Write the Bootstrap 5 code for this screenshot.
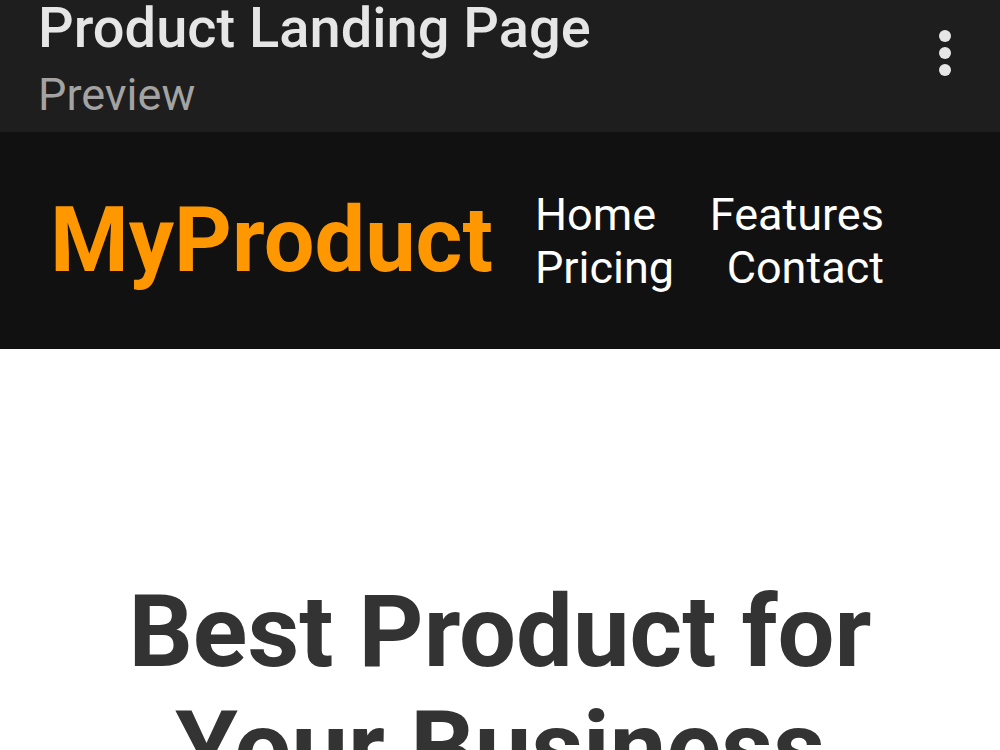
<!DOCTYPE html>
<html lang="en">
<head>
<meta charset="utf-8">
<link href="https://cdn.jsdelivr.net/npm/bootstrap@5.3.0/dist/css/bootstrap.min.css" rel="stylesheet">
<style>
html,body{height:750px;overflow:hidden;background:#fff;}
body{font-family:Roboto,"Liberation Sans",sans-serif;}
.app-bar{height:132px;background:#1e1e1e;padding:0 49px 0 39px;overflow:hidden;}
.app-copy{margin-left:-1px;margin-top:-14px;}
.app-title{font-size:56px;font-weight:500;color:#e6e6e6;line-height:56px;}
.app-sub{font-size:45px;color:#a3a3a3;line-height:48px;margin-top:15px;}
.dots{gap:5px;margin-top:-26px;}
.dots span{width:12px;height:12px;border-radius:50%;background:#e6e6e6;display:block;}
.site-nav{height:217px;background:#111;padding-left:50px;}
.brand{font-size:90px;font-weight:700;color:#ff9800;line-height:1;}
.nav-links{margin-left:42px;width:349px;font-size:45px;line-height:53px;color:#fff;}
.hero-head{font-size:101px;font-weight:700;color:#333;line-height:116px;text-align:center;margin:0;padding-top:225px;}
</style>
</head>
<body>
<header class="app-bar d-flex justify-content-between align-items-center">
<div class="app-copy"><div class="app-title">Product Landing Page</div><div class="app-sub">Preview</div></div>
<div class="dots d-flex flex-column"><span></span><span></span><span></span></div>
</header>
<nav class="site-nav d-flex align-items-center">
<div class="brand">MyProduct</div>
<div class="nav-links"><div class="d-flex justify-content-between"><span>Home</span><span>Features</span></div><div class="d-flex justify-content-between"><span>Pricing</span><span>Contact</span></div></div>
</nav>
<h1 class="hero-head">Best Product for<br>Your Business</h1>
<script src="https://cdn.jsdelivr.net/npm/bootstrap@5.3.0/dist/js/bootstrap.bundle.min.js"></script>
</body>
</html>
